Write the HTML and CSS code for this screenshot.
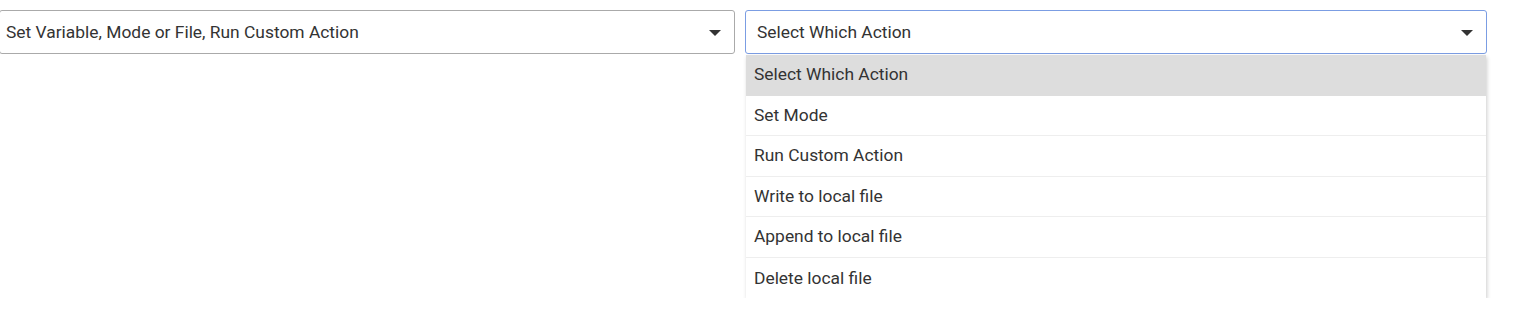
FILE: index.html
```html
<!DOCTYPE html>
<html lang="en">
<head>
    <meta charset="UTF-8">
    <meta name="viewport" content="width=device-width, initial-scale=1.0">
    <title>Action Selector</title>
    <link rel="stylesheet" href="styles.css">
</head>
<body>
    <div class="row">
        <div class="select">
            <span class="select-text">Set Variable, Mode or File, Run Custom Action</span>
            <span class="caret"></span>
        </div>

        <div class="select-wrap">
            <div class="select select-open">
                <span class="select-text">Select Which Action</span>
                <span class="caret"></span>
            </div>
            <ul class="menu">
                <li class="menu-item active">Select Which Action</li>
                <li class="menu-item">Set Mode</li>
                <li class="menu-item">Run Custom Action</li>
                <li class="menu-item">Write to local file</li>
                <li class="menu-item">Append to local file</li>
                <li class="menu-item">Delete local file</li>
            </ul>
        </div>
    </div>
</body>
</html>
```

FILE: styles.css
```css
* {
    margin: 0;
    padding: 0;
    box-sizing: border-box;
}

body {
    font-family: Roboto, 'Liberation Sans', sans-serif;
    font-size: 17.4px;
    color: #333;
    background: white;
}

.row {
    display: grid;
    grid-template-columns: 736px 742px;
    align-items: start;
    gap: 10px;
    padding-top: 10px;
    margin-left: -1px;
}

.select {
    display: flex;
    align-items: center;
    justify-content: space-between;
    height: 44px;
    padding: 0 13px 0 6px;
    border: 1px solid #aaa;
    border-radius: 3px;
    background: white;
}

.select-open {
    border-color: #7b9de3;
    padding-left: 11px;
}

.caret {
    width: 0;
    height: 0;
    border-left: 6.5px solid transparent;
    border-right: 6.5px solid transparent;
    border-top: 6px solid #333;
    margin-top: 2px;
}

.menu {
    list-style: none;
    margin: 1px 1px 0 1px;
    background: white;
    box-shadow: 1px 2px 4px rgba(0, 0, 0, 0.2);
}

.menu-item {
    height: 40.5px;
    line-height: 39.5px;
    padding: 0 8px;
    border-bottom: 1px solid #eee;
}

.menu-item:last-child {
    border-bottom: none;
    line-height: 40px;
}

.menu-item.active {
    background: #ddd;
    border-bottom-color: #ddd;
}
```
